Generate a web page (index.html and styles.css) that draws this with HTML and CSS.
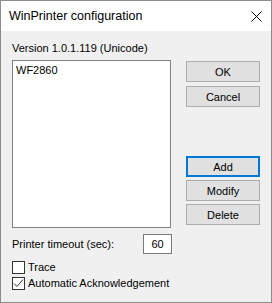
FILE: index.html
```html
<!DOCTYPE html>
<html>
<head>
<meta charset="utf-8">
<link rel="stylesheet" href="styles.css">
</head>
<body>
<div class="window">
  <div class="titlebar">
    <span class="title">WinPrinter configuration</span>
    <svg class="close" width="11" height="11" viewBox="0 0 11 11"><path d="M0.5 0.5 L10.5 10.5 M10.5 0.5 L0.5 10.5" stroke="#000" stroke-width="1" fill="none"/></svg>
  </div>
  <div class="client">
    <div class="version">Version 1.0.1.119 (Unicode)</div>
    <div class="main">
      <div class="listbox"><div class="item">WF2860</div></div>
      <div class="buttons">
        <div class="btn ok">OK</div>
        <div class="btn cancel">Cancel</div>
        <div class="btn add default">Add</div>
        <div class="btn modify">Modify</div>
        <div class="btn delete">Delete</div>
      </div>
    </div>
    <div class="timeout">
      <span class="label">Printer timeout (sec):</span>
      <div class="input">60</div>
    </div>
    <div class="check trace"><span class="box"></span><span>Trace</span></div>
    <div class="check ack"><span class="box"><svg width="11" height="11" viewBox="0 0 11 11"><path d="M1 5.5 L4 8.5 L10 1.5" stroke="#333" stroke-width="1" fill="none"/></svg></span><span>Automatic Acknowledgement</span></div>
  </div>
</div>
</body>
</html>
```
FILE: styles.css
```css
html, body { margin: 0; padding: 0; background: #f0f0f0; }
body { font-family: "Liberation Sans", Arial, sans-serif; font-size: 11px; color: #000; }
.window {
  width: 270px; height: 301px;
  border: 1px solid #8c8c8c;
  background: #f0f0f0;
  display: flex; flex-direction: column;
}
.titlebar {
  height: 30px; background: #fff;
  display: flex; align-items: center; justify-content: space-between;
  padding: 0 9px 0 8px;
  box-sizing: border-box;
}
.title { font-family: "Liberation Sans", Arial, sans-serif; font-size: 12.5px; }
.client { padding: 11px 0 0 11px; }
.version { height: 13px; line-height: 13px; margin-bottom: 5px; }
.main { display: flex; }
.listbox {
  width: 157px; height: 166px;
  border: 1px solid #828282; background: #fff;
}
.item { padding: 3px 0 0 3px; line-height: 13px; }
.buttons { margin-left: 15px; display: flex; flex-direction: column; }
.btn {
  width: 72px; height: 19px; box-sizing: content-box;
  border: 1px solid #adadad; background: #e1e1e1;
  display: flex; align-items: center; justify-content: center;
}
.ok { margin-top: 1px; }
.cancel { margin-top: 4px; }
.add { margin-top: 49px; }
.modify { margin-top: 3px; }
.delete { margin-top: 3px; }
.default { border: 2px solid #0078d7; width: 70px; height: 17px; }
.timeout { display: flex; align-items: center; margin-top: 6px; height: 20px; }
.label { width: 131px; }
.input {
  width: 27px; height: 18px; border: 1px solid #7a7a7a; background: #fff;
  display: flex; align-items: center; justify-content: center;
}
.check { display: flex; align-items: center; height: 16px; }
.trace { margin-top: 5px; }
.box {
  width: 11px; height: 11px; border: 1px solid #333; background: #fff;
  margin-right: 3px; display: flex;
}
.box svg { display: block; }
```
